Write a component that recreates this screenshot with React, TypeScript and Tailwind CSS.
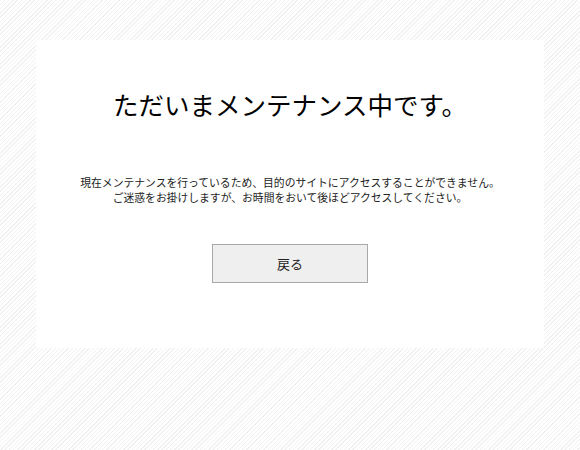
export default function App() {
  return (
    <div
      className="min-h-[450px] w-full pt-10 pb-[102px] px-9 bg-[repeating-linear-gradient(135deg,#f1f1f1_0px,#f1f1f1_1px,#ffffff_1px,#ffffff_3px)]"
      style={{ fontFamily: '"Noto Sans CJK JP", "Noto Sans", sans-serif' }}
    >
      <div className="bg-white h-[308px] flex flex-col items-center pt-[46px]">
        <h1 className="text-[25.5px] leading-[36px] text-black font-normal">
          ただいまメンテナンス中です。
        </h1>
        <div className="mt-[53px] text-[10.8px] leading-[15px] text-[#222] text-center">
          <p>現在メンテナンスを行っているため、目的のサイトにアクセスすることができません。</p>
          <p>ご迷惑をお掛けしますが、お時間をおいて後ほどアクセスしてください。</p>
        </div>
        <button className="mt-[39px] w-[156px] h-[39px] border border-[#a8a8a8] bg-[#efefef] text-[13px] text-[#222]">
          戻る
        </button>
      </div>
    </div>
  );
}
